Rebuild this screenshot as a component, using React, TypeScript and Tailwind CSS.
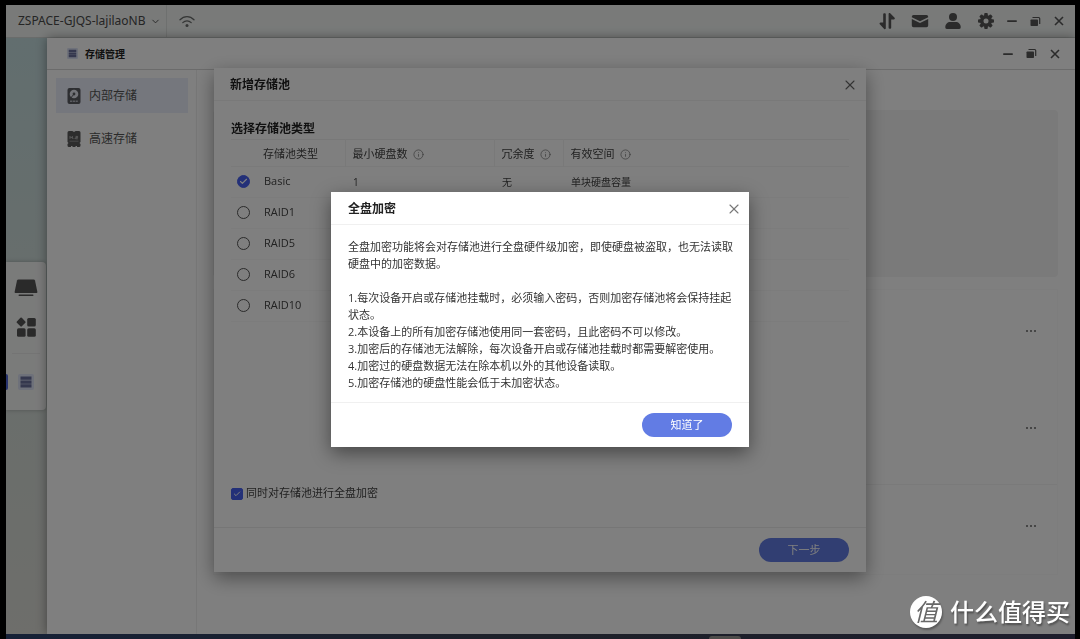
import { useState } from "react";
import { Check, ChevronDown, Info, X } from "lucide-react";

const poolTypes = [
  { id: "basic", name: "Basic", minDisks: "1", redundancy: "无", space: "单块硬盘容量" },
  { id: "raid1", name: "RAID1", minDisks: "", redundancy: "", space: "" },
  { id: "raid5", name: "RAID5", minDisks: "", redundancy: "", space: "" },
  { id: "raid6", name: "RAID6", minDisks: "", redundancy: "", space: "" },
  { id: "raid10", name: "RAID10", minDisks: "", redundancy: "", space: "" },
];

const notes = [
  "1.每次设备开启或存储池挂载时，必须输入密码，否则加密存储池将会保持挂起状态。",
  "2.本设备上的所有加密存储池使用同一套密码，且此密码不可以修改。",
  "3.加密后的存储池无法解除，每次设备开启或存储池挂载时都需要解密使用。",
  "4.加密过的硬盘数据无法在除本机以外的其他设备读取。",
  "5.加密存储池的硬盘性能会低于未加密状态。",
];

function WifiIcon() {
  return (
    <svg viewBox="0 0 16 13" className="h-[13px] w-4" fill="none" stroke="#6a6c6b" strokeLinecap="round">
      <path d="M1 4.8C5 .6 11 .6 15 4.8" strokeWidth="1.3" />
      <path d="M3.8 7.6c2.4-2.4 6-2.4 8.4 0" strokeWidth="1.3" />
      <circle cx="8" cy="10.6" r="1.5" fill="#6a6c6b" stroke="none" />
    </svg>
  );
}

function TransferIcon() {
  return (
    <svg viewBox="0 0 18 18" className="size-[18px]" fill="#565656">
      <path d="M5.2 2.2a1 1 0 0 1 1-1h.6a1 1 0 0 1 1 1v14.1c0 .8-1 1.2-1.6.6L1.800 12.200c-.6-.7-.1-1.700.8-1.700h2.600z" />
      <path d="M13.200 15.800a1 1 0 0 1-1 1h-.6a1 1 0 0 1-1-1V1.900c0-.8 1-1.200 1.600-.6l4.400 4.500c.6.7.1 1.700-.8 1.700h-2.600z" />
    </svg>
  );
}

function MailIcon() {
  return (
    <svg viewBox="0 0 18 18" className="size-[18px]" fill="#565656">
      <path d="M2.500 3h13a1.700 1.700 0 0 1 1.700 1.700v.6L9 9.200.8 5.300v-.6A1.700 1.700 0 0 1 2.500 3z" />
      <path d="M.8 7 9 10.900 17.200 7v6.600a1.700 1.700 0 0 1-1.700 1.700h-13a1.700 1.700 0 0 1-1.700-1.700z" />
    </svg>
  );
}

function UserIcon() {
  return (
    <svg viewBox="0 0 18 18" className="size-[18px]" fill="#565656">
      <circle cx="9" cy="4.900" r="4" />
      <path d="M1.300 15.300c0-3.300 2.200-5.300 5-5.300h5.400c2.800 0 5 2 5 5.300 0 1.200-.5 1.700-1.500 1.700H2.800c-1 0-1.500-.5-1.500-1.700z" />
    </svg>
  );
}

function GearIcon() {
  return (
    <svg viewBox="0 0 18 18" className="size-[18px]" fill="#565656">
      {[0, 45, 90, 135].map((deg) => (
        <rect key={deg} x="7.200" y="1" width="3.600" height="16" rx="1" transform={`rotate(${deg} 9 9)`} />
      ))}
      <circle cx="9" cy="9" r="6" />
      <circle cx="9" cy="9" r="2.500" fill="#f2f5f3" />
    </svg>
  );
}

function WindowControls() {
  return (
    <div className="flex items-center gap-[13px]">
      <button aria-label="最小化" className="size-[10px]">
        <svg viewBox="0 0 10 10" className="size-[10px]">
          <rect x="0" y="4.200" width="10" height="1.800" rx=".9" fill="#565656" />
        </svg>
      </button>
      <button aria-label="还原" className="size-[11px]">
        <svg viewBox="0 0 11 11" className="size-[11px]">
          <rect x=".5" y="3.500" width="7.500" height="6.500" rx=".8" fill="#565656" />
          <path d="M2.500 1.500h6.200a1 1 0 0 1 1 1v5.500" fill="none" stroke="#565656" strokeWidth="1.200" />
        </svg>
      </button>
      <button aria-label="关闭" className="size-[10px]">
        <svg viewBox="0 0 10 10" className="size-[10px]" stroke="#565656" strokeWidth="1.600">
          <path d="m1 1 8 8M9 1 1 9" />
        </svg>
      </button>
    </div>
  );
}

function HddIcon() {
  return (
    <svg viewBox="0 0 14 16" className="h-4 w-[14px]">
      <rect x=".5" y="0" width="13" height="16" rx="2" fill="#5a5c62" />
      <circle cx="7" cy="6" r="4.300" fill="#e4e7f0" />
      <circle cx="7" cy="6" r="1.400" fill="#5a5c62" />
      <path d="m7 6-3.600 4.500" stroke="#5a5c62" strokeWidth="1" />
      <path d="M3 13.200h8" stroke="#b4b7c0" strokeWidth="1.600" strokeDasharray="2.200 .6" />
    </svg>
  );
}

function SsdIcon() {
  return (
    <svg viewBox="0 0 14 16" className="h-4 w-[14px]">
      <path
        d="M2 0h3.500c.3 1 2.700 1 3 0H12a1.500 1.500 0 0 1 1.500 1.500v9.500l-1 1 1 1v1.500A1.500 1.500 0 0 1 12 16h-2v-1H8.500v1H5.500v-1H4v1H2a1.500 1.500 0 0 1-1.500-1.500V13l1-1-1-1V1.500A1.500 1.500 0 0 1 2 0z"
        fill="#5a5a5a"
      />
      <path d="M3 7.800V5.400l1.200 1.400 1.200-1.400v2.400M8.600 5.400h2v1.200h-2v1.200h2.200M7 7.200v.8" fill="none" stroke="#c8c8c8" strokeWidth=".8" />
      <path d="M2.500 10.200h9" stroke="#aaa" strokeWidth=".7" />
    </svg>
  );
}

function StorageIcon({ className }: { className: string }) {
  return (
    <svg viewBox="0 0 16 16" className={className}>
      <rect width="16" height="16" rx="2" fill="#dce2f4" />
      <path d="M2.500 2.500h11v3.300h-11zM2.500 6.400h11v3.300h-11zM2.500 10.300h11v3.300h-11z" fill="#6a709c" />
    </svg>
  );
}

function Dock() {
  return (
    <nav className="flex w-10 flex-col items-center rounded-r bg-[#f5f6f5] pt-[17px] pb-5 shadow-[0_0_4px_rgba(0,0,0,0.25)]">
      <button aria-label="桌面">
        <svg viewBox="0 0 24 18" className="h-[18px] w-6" fill="#545454">
          <path d="M4.500.5h15c.8 0 1.300.4 1.500 1.100L23.400 13c.1.600-.2.900-.8.900H1.400c-.6 0-.9-.3-.8-.9L3 1.600C3.200.9 3.700.5 4.500.5z" />
          <rect x="4.500" y="15.500" width="15" height="1.500" rx=".7" />
        </svg>
      </button>
      <button aria-label="应用中心" className="mt-5">
        <svg viewBox="0 0 20 20" className="size-5" fill="#545454">
          <rect x="1.600" y="1.600" width="7" height="7" rx="1" transform="rotate(45 5.100 5.100)" />
          <rect x="11.200" y="1" width="8.600" height="8.600" rx="1.500" />
          <rect x="1" y="11.200" width="8.600" height="8.600" rx="1.500" />
          <rect x="11.200" y="11.200" width="8.600" height="8.600" rx="1.500" />
        </svg>
      </button>
      <hr className="mt-4 w-7 border-[#e9e9e9]" />
      <button aria-label="存储管理" className="mt-5 flex w-full items-center">
        <span className="h-4 w-[2px] rounded-r bg-[#5068dc]" />
        <StorageIcon className="ml-[10px] size-4" />
      </button>
    </nav>
  );
}

function HeaderCell({ text }: { text: string }) {
  return (
    <th scope="col" className="border-l border-[#f2f2f2] pt-[3px] pl-[7px] text-left font-normal">
      <span className="flex items-center gap-[5px]">
        {text}
        <Info className="size-[11px] text-[#777]" strokeWidth={1.6} />
      </span>
    </th>
  );
}

function PoolDialog() {
  const [selected, setSelected] = useState("basic");
  const [encrypt, setEncrypt] = useState(true);

  return (
    <section
      aria-label="新增存储池"
      className="flex min-h-[504px] w-full max-w-[652px] flex-col bg-white shadow-[0_6px_18px_rgba(0,0,0,0.4)]"
    >
      <header className="flex h-[33px] items-center justify-between border-b border-[#f2f2f2] pt-[2px] pr-2 pl-4">
        <h2 className="text-xs font-bold text-[#222]">新增存储池</h2>
        <button aria-label="关闭">
          <X className="size-4 text-[#666]" strokeWidth={1.6} />
        </button>
      </header>

      <div className="flex flex-1 flex-col px-[17px] pt-[18px] pb-[25px]">
        <h3 className="text-xs leading-5 font-bold text-[#222]">选择存储池类型</h3>
        <table className="w-full table-fixed border-t border-[#f0f0f0] text-[11px] text-[#444]">
          <colgroup>
            <col className="w-8" />
            <col className="w-[82px]" />
            <col className="w-[149px]" />
            <col className="w-[69px]" />
            <col />
          </colgroup>
          <thead>
            <tr className="h-[27px] border-b border-[#f4f4f4]">
              <td />
              <th scope="col" className="pt-[3px] text-left font-normal">存储池类型</th>
              <HeaderCell text="最小硬盘数" />
              <HeaderCell text="冗余度" />
              <HeaderCell text="有效空间" />
            </tr>
          </thead>
          <tbody>
            {poolTypes.map((type) => (
              <tr key={type.id} className="h-[31px] border-b border-[#f8f8f8]">
                <td className="pl-[6px]">
                  <span className="relative block size-[13px]">
                    <input
                      type="radio"
                      id={type.id}
                      name="pool"
                      checked={selected === type.id}
                      onChange={() => setSelected(type.id)}
                      className="block size-[13px] appearance-none rounded-full border border-[#555] checked:border-[#4760f0] checked:bg-[#4760f0]"
                    />
                    {selected === type.id && (
                      <Check className="pointer-events-none absolute top-[2px] left-[2px] size-[9px] text-white" strokeWidth={3} />
                    )}
                  </span>
                </td>
                <td className="pl-px">
                  <label htmlFor={type.id}>{type.name}</label>
                </td>
                <td className="pt-px pl-2 text-[10px]">{type.minDisks}</td>
                <td className="pt-px pl-2 text-[10px]">{type.redundancy}</td>
                <td className="pt-px pl-2 text-[10px]">{type.space}</td>
              </tr>
            ))}
          </tbody>
        </table>

        <label className="mt-auto flex h-4 items-center gap-[3px] text-[11px] text-[#444]">
          <span className="relative block size-3">
            <input
              type="checkbox"
              checked={encrypt}
              onChange={(e) => setEncrypt(e.target.checked)}
              className="block size-3 appearance-none rounded-xs border border-[#666] checked:border-[#4760f0] checked:bg-[#4760f0]"
            />
            {encrypt && (
              <Check className="pointer-events-none absolute top-[2px] left-[2px] size-2 text-white" strokeWidth={3} />
            )}
          </span>
          同时对存储池进行全盘加密
        </label>
      </div>

      <footer className="flex justify-end border-t border-[#ececec] py-[10px] pr-[17px]">
        <button className="h-6 w-[90px] rounded-full bg-[#627ce4] pt-px text-[11px] text-white">下一步</button>
      </footer>
    </section>
  );
}

function EncryptDialog() {
  return (
    <section
      role="dialog"
      aria-modal="true"
      aria-label="全盘加密"
      className="w-full max-w-[418px] bg-white text-[#333] shadow-[0_6px_18px_rgba(0,0,0,0.45)]"
    >
      <header className="flex h-[33px] items-center justify-between border-b border-[#f0f0f0] pt-[2px] pr-[7px] pl-[17px]">
        <h2 className="text-xs font-bold text-[#222]">全盘加密</h2>
        <button aria-label="关闭">
          <X className="size-4 text-[#777]" strokeWidth={1.6} />
        </button>
      </header>
      <div className="pt-[13px] pr-[14px] pb-[11px] pl-[17px] text-[11px] leading-[17px]">
        <p className="mb-[17px]">全盘加密功能将会对存储池进行全盘硬件级加密，即使硬盘被盗取，也无法读取硬盘中的加密数据。</p>
        {notes.map((note) => (
          <p key={note}>{note}</p>
        ))}
      </div>
      <footer className="flex justify-end border-t border-[#f0f0f0] py-[10px] pr-[17px]">
        <button className="h-6 w-[90px] rounded-full bg-[#627ce4] pt-px text-[11px] text-white">知道了</button>
      </footer>
    </section>
  );
}

export default function App() {
  return (
    <div className="flex min-h-screen flex-col bg-black pt-[5px] pr-[5px] pl-[6px] font-['Open_Sans','Noto_Sans_CJK_SC',sans-serif]">
      {/* System bar */}
      <header className="flex h-[33px] items-center justify-between border-b border-[#d4d8d6] bg-[#f2f5f3] pr-[11px] pl-3">
        <div className="flex h-full items-center">
          <button className="flex h-full items-center gap-1 border-r border-[#dde0de] pr-[5px] font-['Noto_Sans',sans-serif] text-xs text-[#4a4a4a]">
            ZSPACE-GJQS-lajilaoNB
            <ChevronDown className="size-[11px]" strokeWidth={2} />
          </button>
          <button aria-label="网络" className="ml-3">
            <WifiIcon />
          </button>
        </div>
        <div className="flex items-center gap-3">
          <div className="flex items-center gap-[15px]">
            <button aria-label="传输"><TransferIcon /></button>
            <button aria-label="消息"><MailIcon /></button>
            <button aria-label="用户"><UserIcon /></button>
            <button aria-label="设置"><GearIcon /></button>
          </div>
          <WindowControls />
        </div>
      </header>

      {/* Desktop */}
      <main className="flex flex-1 bg-linear-to-b from-[#c4dcde] via-[#d2dcd8] to-[#dcdcd6]">
        <aside className="flex w-[41px] items-center">
          <Dock />
        </aside>

        <section aria-label="存储管理" className="flex flex-1 flex-col bg-white shadow-[0_0_10px_rgba(0,0,0,0.4)]">
          <header className="flex h-8 items-center justify-between border-b border-[#d6d6d6] pr-[15px] pl-5">
            <div className="flex items-center gap-[7px]">
              <StorageIcon className="size-[11px]" />
              <h1 className="pt-px text-[10px] font-bold text-[#222]">存储管理</h1>
            </div>
            <WindowControls />
          </header>

          <div className="flex flex-1">
            <nav className="flex w-[150px] flex-col gap-2 border-r border-[#eeeeee] pt-2 pr-2 pl-[9px] text-xs text-[#555]">
              <a href="#internal" className="flex h-[35px] items-center gap-2 bg-[#eaeefa] pl-[11px]">
                <HddIcon />
                <span className="pt-px">内部存储</span>
              </a>
              <a href="#fast" className="flex h-[35px] items-center gap-2 pl-[11px]">
                <SsdIcon />
                <span className="pt-px">高速存储</span>
              </a>
            </nav>

            <div className="flex flex-1 flex-col gap-3 pt-10 pr-[17px] pl-4">
              <div className="h-[167px] rounded bg-[#f4f4f4]" />
              <ul className="border border-[#fbfbfb]">
                {["disk-1", "disk-2", "disk-3"].map((disk) => (
                  <li key={disk} className="flex h-[97px] justify-end pt-[33px] pr-5 last:h-[90px] last:border-t last:border-[#f4f4f4]">
                    <button aria-label="更多" className="h-4">
                      <svg viewBox="0 0 12 4" className="h-1 w-3" fill="#666">
                        <circle cx="2" cy="2" r="1" />
                        <circle cx="6" cy="2" r="1" />
                        <circle cx="10" cy="2" r="1" />
                      </svg>
                    </button>
                  </li>
                ))}
              </ul>
            </div>
          </div>
        </section>
      </main>

      <footer className="flex h-[5px] items-end justify-end bg-linear-to-r from-[#2c426e] via-[#3c4252] to-[#3a3a58] pr-[334px]">
        <span className="h-[3px] w-8 rounded-t bg-[#9a9894]" />
      </footer>

      <div className="fixed inset-0 flex items-center justify-center">
        <PoolDialog />
      </div>
      <div className="fixed inset-0 flex items-center justify-center bg-black/50">
        <EncryptDialog />
      </div>

      {/* Site mark */}
      <div className="fixed right-[10px] bottom-[11px] flex items-center gap-2 text-white">
        <span className="flex size-8 items-center justify-center rounded-full bg-white text-2xl leading-8 text-[#686868] italic shadow-[1px_2px_2px_rgba(0,0,0,0.3)]">
          值
        </span>
        <span className="text-2xl leading-8 font-medium [text-shadow:1px_2px_2px_rgba(0,0,0,0.4)]">什么值得买</span>
      </div>
    </div>
  );
}
